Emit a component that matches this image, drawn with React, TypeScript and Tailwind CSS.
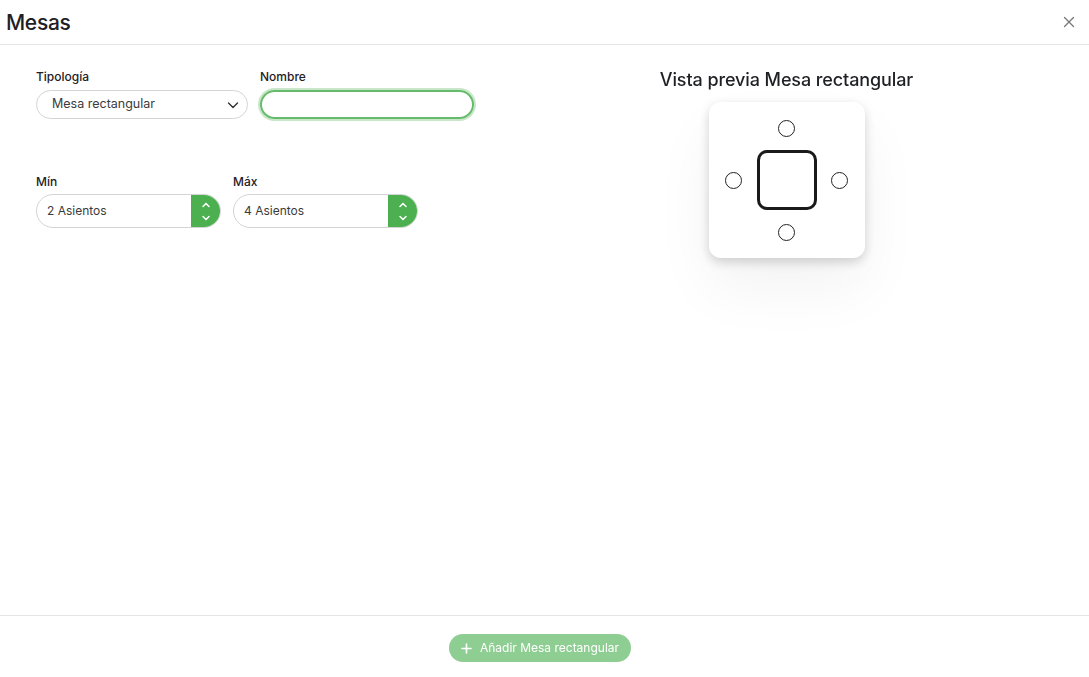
import { useState } from "react";

function Seat() {
  return <div className="w-[17px] h-[17px] rounded-full border border-[#222] bg-white" />;
}

function Stepper({ label, value }: { label: string; value: string }) {
  return (
    <div className="w-[185px]">
      <label className="block text-[12px] font-medium text-[#1f2024] mb-[4px] leading-[16px]">{label}</label>
      <div className="flex h-[34px] rounded-full border border-[#d4d4d4] overflow-hidden">
        <div className="flex-1 flex items-center pl-[10px] text-[12px] text-[#3b3b3b]">{value}</div>
        <div className="w-[29px] bg-[#4caf50] flex flex-col items-center justify-center gap-[7px] text-white">
          <svg width="10" height="6" viewBox="0 0 10 6" fill="none" stroke="currentColor" strokeWidth="1.5" strokeLinecap="round">
            <path d="M2 4.5l3-3 3 3" />
          </svg>
          <svg width="10" height="6" viewBox="0 0 10 6" fill="none" stroke="currentColor" strokeWidth="1.5" strokeLinecap="round">
            <path d="M2 1.5l3 3 3-3" />
          </svg>
        </div>
      </div>
    </div>
  );
}

export default function App() {
  const [name, setName] = useState("");

  return (
    <div className="w-[1089px] h-[677px] bg-white flex flex-col font-['Inter',sans-serif] text-[#1f2024]">
      {/* Header */}
      <div className="h-[45px] flex items-center justify-between border-b border-[#e5e5e5] pl-[6px] pr-[14px]">
        <h1 className="text-[21px] font-medium leading-none tracking-[-0.3px]">Mesas</h1>
        <button className="text-[#777]">
          <svg width="12" height="12" viewBox="0 0 12 12" stroke="currentColor" strokeWidth="1.3" strokeLinecap="round">
            <path d="M1.5 1.5l9 9M10.5 1.5l-9 9" />
          </svg>
        </button>
      </div>

      {/* Body */}
      <div className="flex-1 flex">
        <div className="w-[600px] pl-[36px] pt-[24px]">
          <div className="flex gap-[12px]">
            <div className="w-[212px]">
              <label className="block text-[12px] font-medium mb-[5px] leading-[16px]">Tipología</label>
              <div className="h-[29px] rounded-full border border-[#d4d4d4] flex items-center justify-between pl-[15px] pr-[7px] text-[12.5px] text-[#3b3b3b]">
                <span>Mesa rectangular</span>
                <svg width="14" height="14" viewBox="0 0 14 14" fill="none" stroke="#333" strokeWidth="1.4" strokeLinecap="round" strokeLinejoin="round">
                  <path d="M2.5 5l4.5 4.5 4.5-4.5" />
                </svg>
              </div>
            </div>
            <div className="w-[214px]">
              <label className="block text-[12px] font-medium mb-[5px] leading-[16px]">Nombre</label>
              <input
                autoFocus
                value={name}
                onChange={(e) => setName(e.target.value)}
                className="w-full h-[29px] rounded-full border-2 border-[#66bb6a] ring-2 ring-[#c8e6c9] outline-none px-[9px] text-[13px] caret-[#222]"
              />
            </div>
          </div>

          <div className="flex gap-[12px] mt-[55px]">
            <Stepper label="Mín" value="2 Asientos" />
            <Stepper label="Máx" value="4 Asientos" />
          </div>
        </div>

        {/* Preview */}
        <div className="w-[375px] flex flex-col items-center pt-[23px] ml-[-1px]">
          <h2 className="text-[18px] font-medium leading-[24px] tracking-[-0.1px]">Vista previa Mesa rectangular</h2>
          <div className="mt-[10px] w-[156px] h-[156px] bg-white rounded-[12px] shadow-[0_4px_12px_rgba(0,0,0,0.18),0_30px_60px_rgba(0,0,0,0.05)] grid grid-cols-[1fr_60px_1fr] grid-rows-[1fr_60px_1fr]">
            <div />
            <div className="flex items-center justify-center pt-[4px]"><Seat /></div>
            <div />
            <div className="flex items-center justify-center pl-[2px]"><Seat /></div>
            <div className="border-[3px] border-[#1a1a1a] rounded-[10px]" />
            <div className="flex items-center justify-center pr-[2px]"><Seat /></div>
            <div />
            <div className="flex items-center justify-center pb-[4px]"><Seat /></div>
            <div />
          </div>
        </div>
      </div>

      {/* Footer */}
      <div className="h-[62px] border-t border-[#e5e5e5] flex justify-center pt-[18px]">
        <button
          disabled
          className="h-[28px] px-[12px] rounded-full bg-[#8fce92] text-white text-[12px] flex items-center gap-[8px] ml-[-9px]"
        >
          <svg width="11" height="11" viewBox="0 0 11 11" stroke="currentColor" strokeWidth="1.6" strokeLinecap="round">
            <path d="M5.5 1v9M1 5.5h9" />
          </svg>
          Añadir Mesa rectangular
        </button>
      </div>
    </div>
  );
}
